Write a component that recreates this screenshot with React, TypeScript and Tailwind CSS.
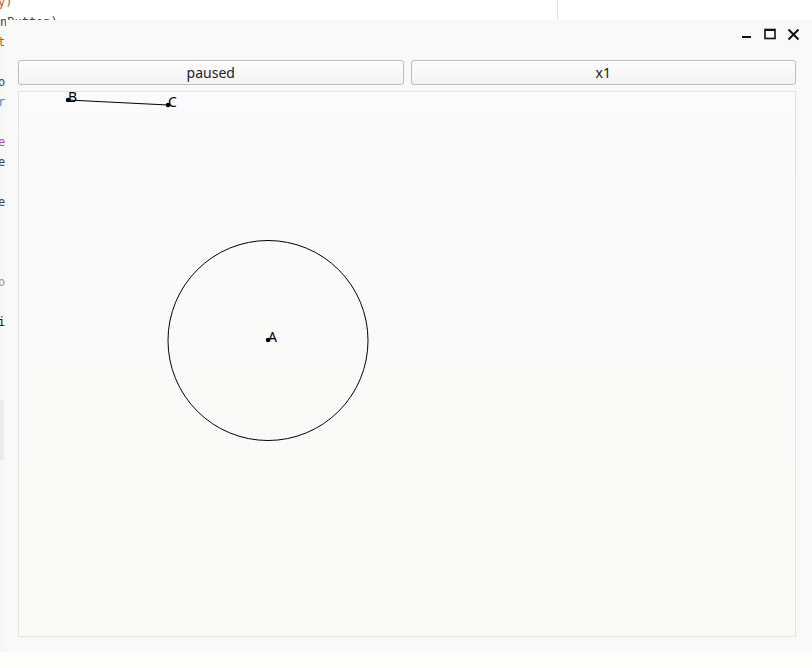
import React from 'react';

const points = [
  { id: 'A', x: 249, y: 248 },
  { id: 'B', x: 49, y: 8 },
  { id: 'C', x: 149, y: 13 },
];

// code editor lines peeking out behind the window (20px per line)
const editorLines: { t: string; c: string }[] = [
  { t: 'y)', c: 'text-[#d05020]' },
  { t: 'nButton)', c: 'text-[#444]' },
  { t: 't', c: 'text-[#c06000]' },
  { t: '', c: '' },
  { t: 'o', c: 'text-[#444]' },
  { t: 'r', c: 'text-[#3a8fd0]' },
  { t: '', c: '' },
  { t: 'e', c: 'text-[#a050c0]' },
  { t: 'e', c: 'text-[#444]' },
  { t: '', c: '' },
  { t: 'e', c: 'text-[#444]' },
  { t: '', c: '' },
  { t: '', c: '' },
  { t: '', c: '' },
  { t: 'o', c: 'text-[#999]' },
  { t: '', c: '' },
  { t: 'i', c: 'text-[#111]' },
];

function TitleButtons() {
  return (
    <div className="flex items-start gap-[11px] pr-[12px] pt-[8px]">
      <svg width="12" height="12" viewBox="0 0 12 12">
        <rect x="1" y="8" width="9" height="2" fill="#111" />
      </svg>
      <svg width="12" height="12" viewBox="0 0 12 12">
        <rect x="1" y="1.5" width="10" height="9" fill="none" stroke="#111" strokeWidth="1.6" />
        <rect x="1" y="1" width="10" height="2" fill="#111" />
      </svg>
      <svg width="13" height="13" viewBox="0 0 13 13">
        <path d="M1.5 1.5 L11.5 11.5 M11.5 1.5 L1.5 11.5" stroke="#111" strokeWidth="2" />
      </svg>
    </div>
  );
}

function Button({ label }: { label: string }) {
  return (
    <button className="flex-1 h-[25px] rounded-[3px] border border-[#bdbdbd] bg-gradient-to-b from-[#fdfdfd] to-[#f3f3f3] text-[14px] text-[#222] leading-none">
      {label}
    </button>
  );
}

export default function App() {
  const a = points[0];
  return (
    <div className="relative w-[812px] h-[668px] overflow-hidden bg-[#fdfdf9] font-['Noto_Sans','Open_Sans',sans-serif]">
      {/* editor behind the window */}
      <div className="absolute inset-0 flex flex-col">
        <div className="h-[20px] bg-white flex">
          <div className="w-[558px] border-r border-[#e4e4e4]" />
        </div>
        <div className="flex-1 flex">
          <div className="w-[6px] h-[632px] bg-[#f7f7f5] flex flex-col pt-[380px]">
            <div className="w-[4px] h-[60px] bg-[#ececec]" />
          </div>
        </div>
      </div>
      <div className="absolute left-[-4px] top-[-8px] flex flex-col font-['DejaVu_Sans_Mono',monospace] text-[12px] leading-[20px]">
        {editorLines.map((l, i) => (
          <div key={i} className={`h-[20px] ${l.c} ${i === 1 ? 'ml-[4px]' : 'ml-[2px]'}`}>
            {l.t}
          </div>
        ))}
      </div>

      {/* window */}
      <div className="absolute left-[6px] top-[20px] w-[806px] h-[632px] bg-[#f9f9f9] flex flex-col">
        <div className="h-[32px] flex justify-end">
          <TitleButtons />
        </div>
        <div className="flex gap-[7px] pl-[12px] pr-[16px] pt-[8px]">
          <Button label="paused" />
          <Button label="x1" />
        </div>
        <div className="ml-[12px] mr-[16px] mt-[6px] h-[546px] border border-[#e2e2e2] bg-gradient-to-b from-[#fbfafc] to-[#fafaf6]">
          <svg width="776" height="544" className="block">
            <line x1={points[1].x} y1={points[1].y} x2={points[2].x} y2={points[2].y} stroke="#000" strokeWidth="1" />
            <circle cx={a.x} cy={a.y + 0.5} r="100" fill="none" stroke="#000" strokeWidth="1" />
            {points.map(p => (
              <g key={p.id}>
                <circle cx={p.x} cy={p.y} r="2.2" fill="#000" />
                <text x={p.x} y={p.y + 2} fontSize="14" fontFamily="Noto Sans, sans-serif" fill="#000">
                  {p.id}
                </text>
              </g>
            ))}
          </svg>
        </div>
      </div>
    </div>
  );
}
